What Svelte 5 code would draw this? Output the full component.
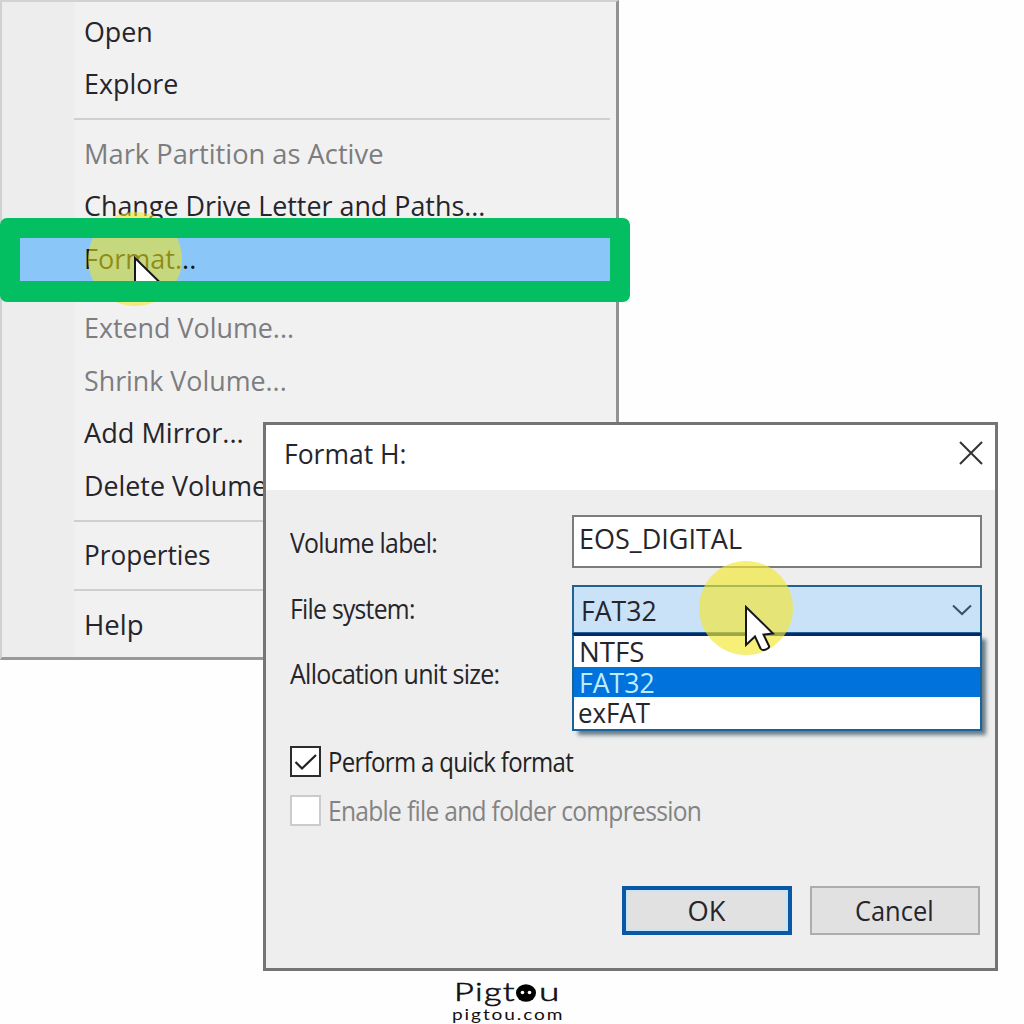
<script>
  // Context menu entries, width = drawn width of the label
  const menuItems = [
    { label: 'Open', width: 69 },
    { label: 'Explore', width: 94 },
    { separator: true },
    { label: 'Mark Partition as Active', width: 299, disabled: true },
    { label: 'Change Drive Letter and Paths...', width: 401 },
    { label: 'Format...', width: 112, active: true },
    { separator: true },
    { label: 'Extend Volume...', width: 210, disabled: true },
    { label: 'Shrink Volume...', width: 203, disabled: true },
    { label: 'Add Mirror...', width: 160 },
    { label: 'Delete Volume...', width: 204 },
    { separator: true },
    { label: 'Properties', width: 127 },
    { separator: true },
    { label: 'Help', width: 60 }
  ];

  const fileSystems = [
    { name: 'NTFS', width: 65 },
    { name: 'FAT32', width: 76 },
    { name: 'exFAT', width: 72 }
  ];

  let selected = 'FAT32';
  let quickFormat = true;

  // Squeeze a label to the given width
  function fit(node, width) {
    node.style.transform = `scaleX(${width / node.offsetWidth})`;
  }
</script>

<div class="page">
  <div class="menu">
    {#each menuItems as item}
      {#if item.separator}
        <div class="separator"></div>
      {:else}
        <div class="item" class:disabled={item.disabled} class:active={item.active}>
          <span class="text" use:fit={item.width}>{item.label}</span>
        </div>
      {/if}
    {/each}
    <div class="spot menu-spot"></div>
    <svg class="cursor menu-cursor" viewBox="-2 -2 32 48">
      <path d="M0 0V38L9 29.5L14.5 41.5Q16 43.5 18.5 43Q24 41 23 39L17.5 27.5L27 26.5Z" />
    </svg>
  </div>

  <div class="frame"></div>

  <div class="dialog">
    <div class="title-bar">
      <span class="text" use:fit={122}>Format H:</span>
      <svg class="close" viewBox="0 0 24 24"><path d="M1 1L23 23M23 1L1 23" /></svg>
    </div>

    <div class="body">
      <div class="form">
        <div class="label"><span class="text tight" use:fit={147}>Volume label:</span></div>
        <div class="input"><span class="text" use:fit={163}>EOS_DIGITAL</span></div>

        <div class="label raised"><span class="text tight" use:fit={125}>File system:</span></div>
        <div class="combo">
          <span class="text" use:fit={76}>{selected}</span>
          <svg class="chevron" viewBox="0 0 20 12"><path d="M1 1.5L10 10L19 1.5" /></svg>
          <div class="list">
            {#each fileSystems as fs}
              <div class="option" class:selected={fs.name === selected}>
                <span class="text" use:fit={fs.width}>{fs.name}</span>
              </div>
            {/each}
          </div>
          <div class="spot combo-spot"></div>
          <svg class="cursor combo-cursor" viewBox="-2 -2 32 48">
            <path d="M0 0V38L9 29.5L14.5 41.5Q16 43.5 18.5 43Q24 41 23 39L17.5 27.5L27 26.5Z" />
          </svg>
        </div>

        <div class="label raised"><span class="text tight" use:fit={209}>Allocation unit size:</span></div>
      </div>

      <div class="check">
        <div class="box">
          {#if quickFormat}
            <svg viewBox="0 0 24 18"><path d="M1.5 9L8 15.5L22 2" /></svg>
          {/if}
        </div>
        <span class="text tight" use:fit={245}>Perform a quick format</span>
      </div>
      <div class="check disabled">
        <div class="box"></div>
        <span class="text tight" use:fit={373}>Enable file and folder compression</span>
      </div>

      <div class="buttons">
        <div class="button primary"><span class="text center" use:fit={38}>OK</span></div>
        <div class="button"><span class="text center" use:fit={79}>Cancel</span></div>
      </div>
    </div>
  </div>

  <div class="logo">
    <div class="brand">
      <span class="text" use:fit={62}>Pigt</span>
      <svg viewBox="0 0 20 18">
        <ellipse cx="10" cy="9" rx="10" ry="8.7" />
        <circle class="eye" cx="6.5" cy="8.5" r="1.8" />
        <circle class="eye" cx="13.5" cy="8.5" r="1.8" />
      </svg>
      <span class="text" use:fit={20}>u</span>
    </div>
    <div class="site"><span class="text" use:fit={112}>pigtou.com</span></div>
  </div>
</div>

<style>
  :global(body) {
    background: #fefefe;
  }

  .page {
    position: relative;
    width: 1024px;
    height: 1024px;
    overflow: hidden;
    background: #fefefe;
    font-family: 'Open Sans', 'Noto Sans', sans-serif;
    font-size: 28px;
    line-height: 30px;
    color: #25252b;
  }

  .text {
    display: inline-block;
    white-space: pre;
    transform-origin: left center;
  }

  .text.center {
    transform-origin: center;
  }

  .text.tight {
    letter-spacing: -0.8px;
  }

  .menu {
    position: absolute;
    left: 0;
    top: 0;
    box-sizing: border-box;
    width: 619px;
    height: 660px;
    padding-top: 3px;
    border-top: 2px solid #d2d2d2;
    border-left: 2px solid #d0d0d0;
    border-right: 3px solid #929292;
    border-bottom: 3px solid #999;
    background: linear-gradient(90deg, #ededed 71px, #f1f1f1 74px);
  }

  .item {
    display: flex;
    align-items: center;
    box-sizing: border-box;
    height: 52.5px;
    padding: 0 0 1px 82px;
  }

  .item.disabled {
    color: #7d7d7f;
  }

  .item.active {
    margin-left: 6px;
    margin-right: 5px;
    padding-left: 76px;
    background: #8ac6f8;
    color: #16160f;
  }

  .separator {
    height: 2px;
    margin: 8px 6px 7px 72px;
    background: #cfcfcf;
  }

  .spot {
    position: absolute;
    width: 94px;
    height: 94px;
    border-radius: 50%;
    background: rgba(242, 230, 50, 0.66);
  }

  .menu-spot {
    left: 86px;
    top: 210px;
    background: rgba(244, 230, 30, 0.56);
  }

  .cursor {
    position: absolute;
    width: 32px;
    height: 48px;
    fill: #fff;
    stroke: #16161c;
    stroke-width: 2;
  }

  .menu-cursor {
    left: 131px;
    top: 254px;
  }

  .frame {
    position: absolute;
    left: 0;
    top: 218px;
    box-sizing: border-box;
    width: 630px;
    height: 84px;
    border: 20px solid #03bf62;
    border-bottom-width: 21px;
    border-radius: 7px;
  }

  .dialog {
    position: absolute;
    left: 263px;
    top: 422px;
    box-sizing: border-box;
    width: 735px;
    height: 549px;
    border: 3px solid #747474;
    background: #eee;
  }

  .title-bar {
    display: flex;
    justify-content: space-between;
    align-items: center;
    box-sizing: border-box;
    height: 65px;
    padding: 0 12px 10px 18px;
    background: #fff;
  }

  .close {
    width: 24px;
    height: 24px;
    fill: none;
    stroke: #333;
    stroke-width: 2;
  }

  .body {
    padding: 25px 13px 0 24px;
  }

  .form {
    display: grid;
    grid-template-columns: 282px 410px;
    grid-template-rows: 53px 49px 48px;
    row-gap: 17px;
  }

  .label {
    display: flex;
    align-items: center;
  }

  .label.raised {
    padding-bottom: 4px;
  }

  .input {
    box-sizing: border-box;
    padding: 6px 0 0 5px;
    border: 2px solid #7c7c7c;
    background: #fff;
  }

  .combo {
    position: relative;
    display: flex;
    justify-content: space-between;
    align-items: center;
    box-sizing: border-box;
    padding: 0 8px 0 7px;
    border: 2px solid #1e6392;
    background: #cae2f8;
  }

  .chevron {
    width: 20px;
    height: 12px;
    fill: none;
    stroke: #3a5064;
    stroke-width: 2;
  }

  .list {
    position: absolute;
    left: -2px;
    top: 46px;
    box-sizing: border-box;
    width: 410px;
    height: 98px;
    border: 2px solid #17649b;
    border-top: 3px solid #06286c;
    background: #fff;
    box-shadow: 5px 5px 4px -1px rgba(30, 60, 80, 0.65);
    line-height: 22px;
  }

  .option {
    display: flex;
    align-items: center;
    box-sizing: border-box;
    height: 30.5px;
    padding-left: 5px;
  }

  .option:last-child {
    padding-left: 4px;
  }

  .option.selected {
    background: #0072dc;
    color: #bdecff;
  }

  .combo-spot {
    left: 125px;
    top: -26px;
  }

  .combo-cursor {
    left: 170px;
    top: 18px;
  }

  .check {
    display: flex;
    align-items: center;
    gap: 7px;
    height: 31px;
    margin-top: 18px;
    color: #222;
  }

  .form + .check {
    margin-top: 47px;
  }

  .check.disabled {
    color: #838383;
  }

  .box {
    display: flex;
    align-items: center;
    justify-content: center;
    box-sizing: border-box;
    width: 31px;
    height: 31px;
    border: 2px solid #2c2c2c;
    background: #fff;
  }

  .box svg {
    width: 24px;
    height: 18px;
    fill: none;
    stroke: #222;
    stroke-width: 2.2;
  }

  .disabled .box {
    border-color: #cbcbcb;
  }

  .check .text {
    margin-top: -1px;
  }

  .buttons {
    display: flex;
    justify-content: flex-end;
    gap: 18px;
    margin: 60px 2px 0 0;
  }

  .button {
    display: flex;
    align-items: center;
    justify-content: center;
    box-sizing: border-box;
    width: 170px;
    height: 49px;
    padding: 0 2px 1px 0;
    border: 2px solid #adadad;
    background: #e1e1e1;
  }

  .button.primary {
    border: 4px solid #0b57a4;
    box-shadow: inset 0 0 0 2px #c4e6fb;
  }

  .logo {
    position: absolute;
    left: 452px;
    top: 976px;
    width: 116px;
    color: #111;
    font-family: Lato, 'Open Sans', sans-serif;
  }

  .brand {
    display: grid;
    grid-template-columns: 61px 21px 24px;
    align-items: center;
    height: 30px;
    padding-left: 2px;
    font-size: 26px;
    font-weight: 300;
    -webkit-text-stroke: 0.6px #111;
  }

  .brand .text {
    justify-self: start;
    letter-spacing: 1px;
  }

  .brand svg {
    width: 20px;
    height: 18px;
    margin: 4px 0 0 1px;
    stroke: none;
  }

  .brand .text:last-child {
    margin-left: 3px;
    letter-spacing: 0;
  }

  .eye {
    fill: #fff;
  }

  .site {
    margin-top: -1px;
    font-size: 16px;
    line-height: 18px;
    letter-spacing: 1.6px;
  }

  .site .text {
    display: block;
    width: max-content;
  }
</style>
